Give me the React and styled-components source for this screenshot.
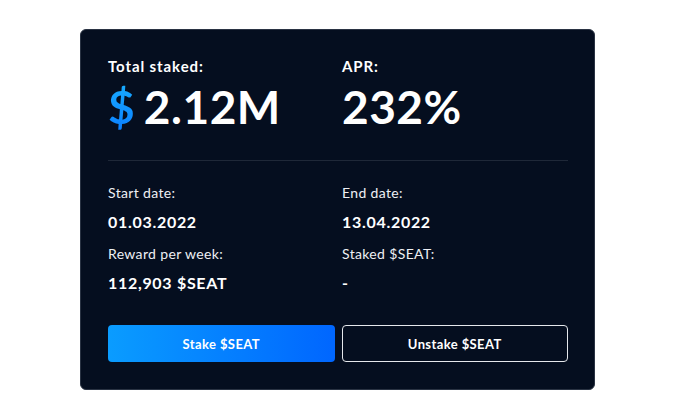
import React from 'react'
import styled, { createGlobalStyle } from 'styled-components';

const GlobalStyle = createGlobalStyle`
  html, body {
    margin: 0;
    padding: 0;
    background: #ffffff;
  }
  body {
    font-family: Lato, "Open Sans", sans-serif;
    -webkit-font-smoothing: antialiased;
  }
`

const stats = [
    { label: 'Start date:', value: '01.03.2022' },
    { label: 'End date:', value: '13.04.2022' },
    { label: 'Reward per week:', value: '112,903 $SEAT' },
    { label: 'Staked $SEAT:', value: '-' },
]

function App() {
    return (
        <Page>
            <GlobalStyle />
            <Card>
                <Header>
                    <Block>
                        <HeadLabel>Total staked:</HeadLabel>
                        <BigValue><Dollar>$</Dollar> 2.12M</BigValue>
                    </Block>
                    <Block>
                        <HeadLabel>APR:</HeadLabel>
                        <BigValue>232%</BigValue>
                    </Block>
                </Header>

                <Divider />

                <Stats>
                    {stats.map((s) => (
                        <Stat key={s.label}>
                            <StatLabel>{s.label}</StatLabel>
                            <StatValue>{s.value}</StatValue>
                        </Stat>
                    ))}
                </Stats>

                <Actions>
                    <Button primary>Stake $SEAT</Button>
                    <Button>Unstake $SEAT</Button>
                </Actions>
            </Card>
        </Page>
    )
}

export default App;

const Page = styled.div`
width: 675px;
height: 420px;
padding: 29px 0 0 80px;
box-sizing: border-box;
`

const Card = styled.div`
width: 515px;
height: 361px;
box-sizing: border-box;
background: #050e1f;
border: 1px solid #2a3343;
border-radius: 6px;
padding: 27px 26px 0 27px;
color: #ffffff;
`

const Header = styled.div`
display: grid;
grid-template-columns: 1fr 1fr;
column-gap: 8px;
`

const Block = styled.div`
display: flex;
flex-direction: column;
gap: 6px;
`

const HeadLabel = styled.div`
font-size: 15px;
line-height: 18px;
font-weight: 700;
letter-spacing: 0.9px;
`

const BigValue = styled.div`
font-size: 46px;
line-height: 52px;
font-weight: 700;
letter-spacing: 0.5px;
word-spacing: -3px;
white-space: nowrap;
`

const Dollar = styled.span`
background: linear-gradient(180deg, #19b0ff 0%, #0a7cff 100%);
-webkit-background-clip: text;
background-clip: text;
color: transparent;
`

const Divider = styled.div`
height: 1px;
background: #1f2838;
margin: 27px 0 23px;
`

const Stats = styled.div`
display: grid;
grid-template-columns: 1fr 1fr;
column-gap: 8px;
row-gap: 13px;
`

const Stat = styled.div`
display: flex;
flex-direction: column;
gap: 10px;
`

const StatLabel = styled.div`
font-size: 14px;
line-height: 18px;
color: #eef0f4;
letter-spacing: 0.35px;
`

const StatValue = styled.div`
font-size: 16px;
line-height: 20px;
font-weight: 700;
letter-spacing: 0.7px;
`

const Actions = styled.div`
display: grid;
grid-template-columns: 1fr 1fr;
column-gap: 7px;
margin-top: 32px;
`

const Button = styled.button`
height: 37px;
border-radius: 4px;
font-family: Lato, "Open Sans", sans-serif;
font-size: 13px;
font-weight: 700;
letter-spacing: 0.4px;
color: #ffffff;
cursor: pointer;
border: ${(p) => (p.primary ? 'none' : '1.5px solid #e6e8ec')};
background: ${(p) => (p.primary ? 'linear-gradient(90deg, #0a9cff 0%, #0066ff 100%)' : '#050e1f')};
`
